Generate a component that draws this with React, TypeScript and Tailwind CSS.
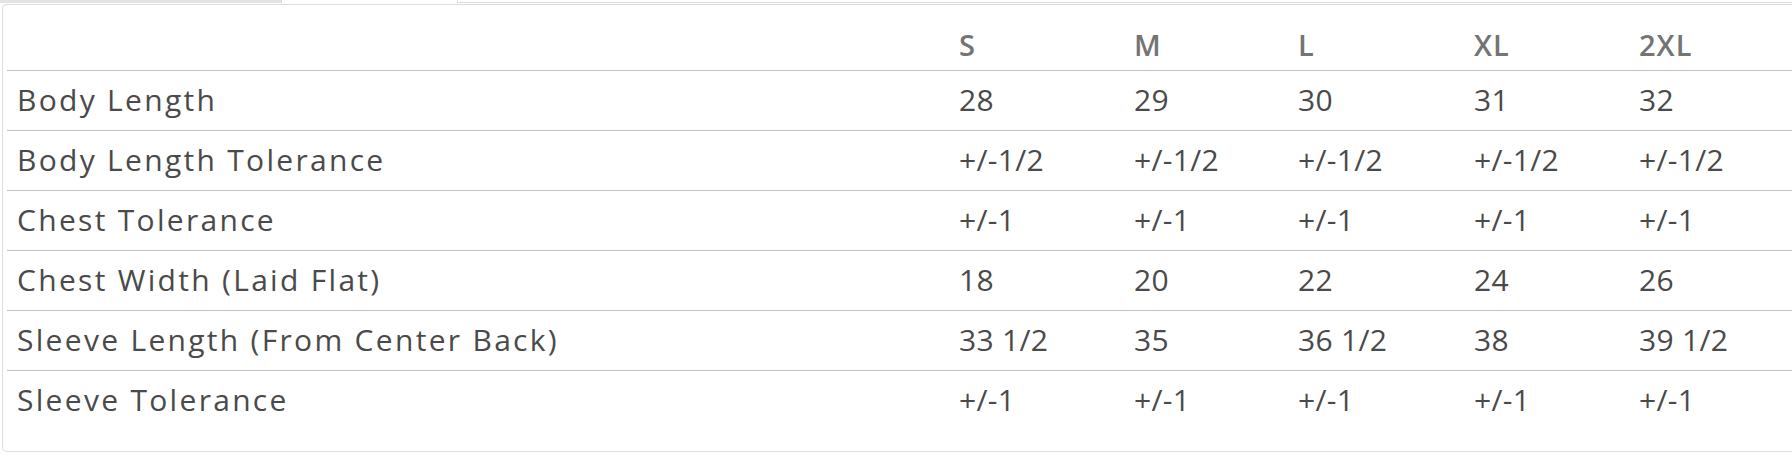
import React from 'react';

const SIZES = ['S', 'M', 'L', 'XL', '2XL'];

const ROWS: { label: string; values: string[] }[] = [
  { label: 'Body Length', values: ['28', '29', '30', '31', '32'] },
  { label: 'Body Length Tolerance', values: ['+/-1/2', '+/-1/2', '+/-1/2', '+/-1/2', '+/-1/2'] },
  { label: 'Chest Tolerance', values: ['+/-1', '+/-1', '+/-1', '+/-1', '+/-1'] },
  { label: 'Chest Width (Laid Flat)', values: ['18', '20', '22', '24', '26'] },
  { label: 'Sleeve Length (From Center Back)', values: ['33 1/2', '35', '36 1/2', '38', '39 1/2'] },
  { label: 'Sleeve Tolerance', values: ['+/-1', '+/-1', '+/-1', '+/-1', '+/-1'] },
];

export default function App() {
  return (
    <div className="h-[462px] w-[1792px] overflow-hidden bg-white font-['Open_Sans',sans-serif]">
      {/* tab bottoms */}
      <div className="flex h-[4px]">
        <div className="h-[3px] w-[282px] border-r border-[#d6d6d6] bg-[#e3e3e3]" />
        <div className="w-[175px]" />
        <div className="h-[3px] flex-1 border-b border-l border-[#dcdcdc]" />
      </div>
      <div className="ml-[2px] h-[448px] rounded-l-[5px] border border-r-0 border-[#dddddd] pl-[4px]">
        <table className="w-full table-fixed border-collapse">
          <colgroup>
            <col className="w-[940px]" />
            <col className="w-[175px]" />
            <col className="w-[164px]" />
            <col className="w-[176px]" />
            <col className="w-[165px]" />
            <col />
          </colgroup>
          <thead>
            <tr className="h-[65px] border-b border-[#c2c2c2]">
              <th />
              {SIZES.map((s) => (
                <th
                  key={s}
                  className="pb-[3px] pl-[12px] text-left align-bottom text-[29px] leading-[45px] font-semibold tracking-[1px] text-[#747474]"
                >
                  {s}
                </th>
              ))}
            </tr>
          </thead>
          <tbody>
            {ROWS.map((row, i) => (
              <tr
                key={row.label}
                className={`h-[60px] ${i < ROWS.length - 1 ? 'border-b border-[#c2c2c2]' : ''}`}
              >
                <td className="pb-[1px] pl-[10px] text-[30px] leading-[45px] tracking-[2.3px] text-[#4a4a4a]">
                  {row.label}
                </td>
                {row.values.map((v, j) => (
                  <td
                    key={j}
                    className="pb-[1px] pl-[12px] text-[30px] leading-[45px] tracking-[0.3px] text-[#4a4a4a]"
                  >
                    {v}
                  </td>
                ))}
              </tr>
            ))}
          </tbody>
        </table>
      </div>
    </div>
  );
}
